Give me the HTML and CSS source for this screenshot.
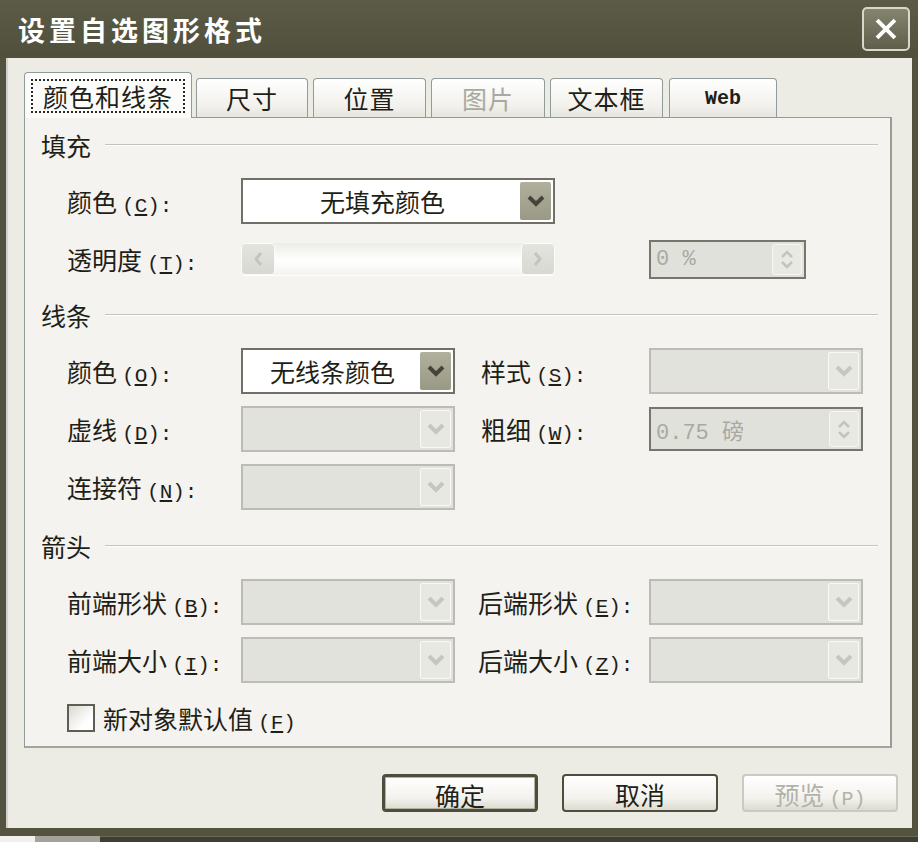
FILE: index.html
```html
<!DOCTYPE html>
<html lang="zh-CN">
<head>
<meta charset="utf-8">
<title>设置自选图形格式</title>
<link rel="stylesheet" href="styles.css">
</head>
<body>
<div class="window">
  <div class="titlebar">
    <span class="title">设置自选图形格式</span>
    <span class="close">
      <svg width="26" height="26" viewBox="0 0 24 24"><path d="M5 5 L19 19 M19 5 L5 19" stroke="#fff" stroke-width="3.6" stroke-linecap="square" fill="none"/></svg>
    </span>
  </div>

  <div class="client">
    <div class="tabs">
      <div class="tab active"><span class="focus">颜色和线条</span></div>
      <div class="tab w112">尺寸</div>
      <div class="tab w113">位置</div>
      <div class="tab w114 off">图片</div>
      <div class="tab w113">文本框</div>
      <div class="tab w108 latin">Web</div>
    </div>

    <div class="panel">
      <!-- 填充 -->
      <div class="group first">
        <div class="grouphead"><span>填充</span></div>
        <div class="fields">
          <label>颜色<span class="key">(<u>C</u>):</span></label>
          <div class="combo span2">
            <span class="value">无填充颜色</span>
            <span class="drop"><svg width="18" height="12" viewBox="0 0 18 12"><path d="M2 2 L9 9 L16 2" stroke="#45443a" stroke-width="4" fill="none"/></svg></span>
          </div>

          <label>透明度<span class="key">(<u>T</u>):</span></label>
          <div class="slider span2">
            <span class="sbtn"><svg width="12" height="18" viewBox="0 0 12 18"><path d="M9 3 L4 9 L9 15" stroke="#c4c4bc" stroke-width="3" fill="none"/></svg></span>
            <span class="sbtn"><svg width="12" height="18" viewBox="0 0 12 18"><path d="M3 3 L8 9 L3 15" stroke="#c4c4bc" stroke-width="3" fill="none"/></svg></span>
          </div>
          <div class="spin col4 short">
            <span class="num">0 %</span>
            <span class="arrows">
              <svg width="14" height="8" viewBox="0 0 14 8"><path d="M2 7 L7 2 L12 7" stroke="#c4c4bc" stroke-width="2.6" fill="none"/></svg>
              <svg width="14" height="8" viewBox="0 0 14 8"><path d="M2 1 L7 6 L12 1" stroke="#c4c4bc" stroke-width="2.6" fill="none"/></svg>
            </span>
          </div>
        </div>
      </div>

      <!-- 线条 -->
      <div class="group">
        <div class="grouphead"><span>线条</span></div>
        <div class="fields">
          <label>颜色<span class="key">(<u>O</u>):</span></label>
          <div class="combo">
            <span class="value">无线条颜色</span>
            <span class="drop"><svg width="18" height="12" viewBox="0 0 18 12"><path d="M2 2 L9 9 L16 2" stroke="#45443a" stroke-width="4" fill="none"/></svg></span>
          </div>
          <label class="right">样式<span class="key">(<u>S</u>):</span></label>
          <div class="combo off">
            <span class="value"></span>
            <span class="drop"><svg width="18" height="12" viewBox="0 0 18 12"><path d="M2 2 L9 9 L16 2" stroke="#c6c6be" stroke-width="4" fill="none"/></svg></span>
          </div>

          <label>虚线<span class="key">(<u>D</u>):</span></label>
          <div class="combo off">
            <span class="value"></span>
            <span class="drop"><svg width="18" height="12" viewBox="0 0 18 12"><path d="M2 2 L9 9 L16 2" stroke="#c6c6be" stroke-width="4" fill="none"/></svg></span>
          </div>
          <label class="right">粗细<span class="key">(<u>W</u>):</span></label>
          <div class="spin tall">
            <span class="num">0.75 磅</span>
            <span class="arrows">
              <svg width="14" height="8" viewBox="0 0 14 8"><path d="M2 7 L7 2 L12 7" stroke="#c4c4bc" stroke-width="2.6" fill="none"/></svg>
              <svg width="14" height="8" viewBox="0 0 14 8"><path d="M2 1 L7 6 L12 1" stroke="#c4c4bc" stroke-width="2.6" fill="none"/></svg>
            </span>
          </div>

          <label>连接符<span class="key">(<u>N</u>):</span></label>
          <div class="combo off">
            <span class="value"></span>
            <span class="drop"><svg width="18" height="12" viewBox="0 0 18 12"><path d="M2 2 L9 9 L16 2" stroke="#c6c6be" stroke-width="4" fill="none"/></svg></span>
          </div>
        </div>
      </div>

      <!-- 箭头 -->
      <div class="group arrows-group">
        <div class="grouphead"><span>箭头</span></div>
        <div class="fields">
          <label>前端形状<span class="key">(<u>B</u>):</span></label>
          <div class="combo off">
            <span class="value"></span>
            <span class="drop"><svg width="18" height="12" viewBox="0 0 18 12"><path d="M2 2 L9 9 L16 2" stroke="#c6c6be" stroke-width="4" fill="none"/></svg></span>
          </div>
          <label class="right alt">后端形状<span class="key">(<u>E</u>):</span></label>
          <div class="combo off">
            <span class="value"></span>
            <span class="drop"><svg width="18" height="12" viewBox="0 0 18 12"><path d="M2 2 L9 9 L16 2" stroke="#c6c6be" stroke-width="4" fill="none"/></svg></span>
          </div>

          <label>前端大小<span class="key">(<u>I</u>):</span></label>
          <div class="combo off">
            <span class="value"></span>
            <span class="drop"><svg width="18" height="12" viewBox="0 0 18 12"><path d="M2 2 L9 9 L16 2" stroke="#c6c6be" stroke-width="4" fill="none"/></svg></span>
          </div>
          <label class="right alt">后端大小<span class="key">(<u>Z</u>):</span></label>
          <div class="combo off">
            <span class="value"></span>
            <span class="drop"><svg width="18" height="12" viewBox="0 0 18 12"><path d="M2 2 L9 9 L16 2" stroke="#c6c6be" stroke-width="4" fill="none"/></svg></span>
          </div>

          <div class="check">
            <span class="box"></span>
            <span>新对象默认值<span class="key">(<u>F</u>)</span></span>
          </div>
        </div>
      </div>
    </div>

    <div class="buttons">
      <button class="btn default">确定</button>
      <button class="btn">取消</button>
      <button class="btn off">预览<span class="key">(P)</span></button>
    </div>
  </div>

  <div class="strip">
    <span class="s1"></span><span class="s2"></span><span class="s3"></span>
  </div>
</div>
</body>
</html>
```

FILE: styles.css
```css
body {
	margin: 0;
	background-color: #54533f;
	font-family: "Noto Sans CJK SC", "Noto Sans", sans-serif;
	color: #1f1f18;
}
.window {
	width: 918px;
	height: 842px;
	display: flex;
	flex-direction: column;
	background-color: #54533f;
}

/* title bar */
.titlebar {
	height: 58px;
	flex: none;
	box-sizing: border-box;
	display: flex;
	align-items: center;
	justify-content: space-between;
	padding: 0 8px 0 18px;
	background: linear-gradient(#5c5b47, #504f3c);
}
.title {
	color: #FFFFFF;
	font-size: 27px;
	font-weight: 700;
	letter-spacing: 4px;
}
.close {
	width: 48px;
	height: 44px;
	box-sizing: border-box;
	border: 2px solid #d8d7cb;
	border-radius: 5px;
	background: linear-gradient(#85846f, #5f5e4b);
	display: flex;
	align-items: center;
	justify-content: center;
}

/* client area */
.client {
	height: 770px;
	flex: none;
	box-sizing: border-box;
	margin: 0 6px;
	padding: 14px 20px 0 18px;
	background-color: #ecebe4;
	border-left: 2px solid #d4d3ca;
}

/* tabs */
.tabs {
	display: flex;
	align-items: flex-end;
	height: 45px;
	margin-left: -2px;
}
.tab {
	height: 39px;
	box-sizing: border-box;
	margin-left: 5px;
	border: 1px solid #919b9c;
	border-bottom: none;
	border-radius: 4px 4px 0 0;
	background: linear-gradient(#ffffff, #f2f1ec 70%, #e6e5de);
	display: flex;
	align-items: center;
	justify-content: center;
	font-size: 25px;
	letter-spacing: 1px;
}
.tab.active {
	width: 168px;
	height: 46px;
	margin-left: 0;
	margin-bottom: -1px;
	position: relative;
	z-index: 1;
	background: #fbfbf9;
}
.focus {
	width: 154px;
	height: 34px;
	box-sizing: border-box;
	border: 2px dotted #2a2a22;
	display: flex;
	align-items: center;
	justify-content: center;
}
.w112 { width: 112px; margin-left: 4px; }
.w113 { width: 113px; }
.w114 { width: 114px; }
.w108 { width: 108px; margin-left: 6px; }
.tab.off { color: #a9a9a1; }
.tab.latin {
	font-family: "Liberation Mono", monospace;
	font-weight: 700;
	font-size: 20px;
	letter-spacing: 0;
}

/* panel */
.panel {
	width: 868px;
	height: 631px;
	box-sizing: border-box;
	margin-left: -2px;
	border: 1px solid #919b9c;
	border-right: 2px solid #9c9c94;
	border-bottom: 2px solid #a4a49c;
	background: #f4f3ef;
	padding: 12px 12px 0 16px;
}
.group { margin-top: 12px; }
.group.first { margin-top: 0; }
.group.arrows-group { margin-top: 15px; }
.grouphead {
	height: 30px;
	display: flex;
	align-items: center;
	font-size: 25px;
	letter-spacing: 0;
}
.grouphead::after {
	content: "";
	flex: 1;
	margin-left: 14px;
	border-top: 1px solid #c6c4ba;
	border-bottom: 1px solid #ffffff;
}
.fields {
	display: grid;
	grid-template-columns: 174px 214px 194px 214px;
	grid-auto-rows: 58px;
	align-items: center;
	padding-left: 26px;
	margin-top: 12px;
}
.fields label {
	grid-column: 1;
	font-size: 25px;
	white-space: nowrap;
}
.fields label.right {
	grid-column: 3;
	padding-left: 26px;
}
.fields label.alt { padding-left: 23px; }
.key {
	font-family: "Liberation Mono", monospace;
	font-size: 21px;
	margin-left: 5px;
}
.span2 { grid-column: 2 / 4; }
.col4 { grid-column: 4; }

/* combo boxes */
.combo {
	height: 46px;
	box-sizing: border-box;
	border: 2px solid #707069;
	background: #FFFFFF;
	display: flex;
	padding: 2px;
}
.combo.span2 { width: 314px; }
.combo .value {
	flex: 1;
	display: flex;
	align-items: center;
	justify-content: center;
	font-size: 25px;
}
.combo .drop {
	width: 31px;
	border-radius: 2px;
	background: linear-gradient(#b1b09d, #9a9985);
	display: flex;
	align-items: center;
	justify-content: center;
}
.combo.off {
	border-color: #bcbcb4;
	background: #e2e2dd;
}
.combo.off .drop {
	box-sizing: border-box;
	background: #e8e8e3;
	border: 1px solid #f9f9f7;
}

/* slider */
.slider {
	width: 314px;
	height: 32px;
	display: flex;
	justify-content: space-between;
	border-radius: 3px;
	background: linear-gradient(#ecece7, #ffffff 55%, #f3f3ef);
	box-shadow: 0 1px 0 #ffffff;
}
.sbtn {
	width: 34px;
	box-sizing: border-box;
	border: 1px solid #fbfbfa;
	border-radius: 4px;
	background: linear-gradient(#e4e4df, #d8d8d2);
	display: flex;
	align-items: center;
	justify-content: center;
}

/* spin boxes */
.spin {
	box-sizing: border-box;
	border: 2px solid #76766f;
	background: #e1e1dc;
	display: flex;
	padding: 2px;
}
.spin.short { width: 157px; height: 39px; }
.spin.tall { width: 214px; height: 44px; }
.spin .num {
	flex: 1;
	display: flex;
	align-items: center;
	padding-left: 3px;
	font-family: "Liberation Mono", "Noto Sans CJK SC", monospace;
	font-size: 22px;
	color: #a9a9a1;
}
.spin .arrows {
	width: 30px;
	box-sizing: border-box;
	border: 1px solid #f6f6f3;
	border-radius: 3px;
	background: #e9e9e4;
	display: flex;
	flex-direction: column;
	align-items: center;
	justify-content: center;
	gap: 3px;
}

/* checkbox */
.check {
	grid-column: 1 / -1;
	display: flex;
	align-items: center;
	gap: 8px;
	font-size: 25px;
}
.check .box {
	width: 28px;
	height: 28px;
	box-sizing: border-box;
	border: 2px solid #5e5e52;
	background: linear-gradient(135deg, #d9d9d1, #ffffff 70%);
}

/* buttons */
.buttons {
	display: flex;
	justify-content: flex-end;
	gap: 24px;
	margin-top: 26px;
	margin-right: -6px;
}
.btn {
	width: 156px;
	height: 38px;
	box-sizing: border-box;
	border: 2px solid #4f4e3d;
	border-radius: 4px;
	background: linear-gradient(#ffffff, #f3f2ed 65%, #dddbd1);
	font-family: "Noto Sans CJK SC", sans-serif;
	font-size: 25px;
	color: #1f1f18;
	padding: 0;
}
.btn .key { font-size: 20px; }
.btn.default {
	border-width: 3px;
	box-shadow: inset 0 0 0 1px #b4b3a2;
}
.btn.off {
	border-color: #cbc9c1;
	color: #b3b2aa;
}

/* bottom edge */
.strip {
	margin-top: auto;
	height: 6px;
	display: flex;
}
.s1 { width: 35px; background: #f0f0ec; }
.s2 { width: 65px; background: #a3a39b; }
.s3 { flex: 1; background: #3f3e30; border-top: 1px solid #6a6958; }
```
